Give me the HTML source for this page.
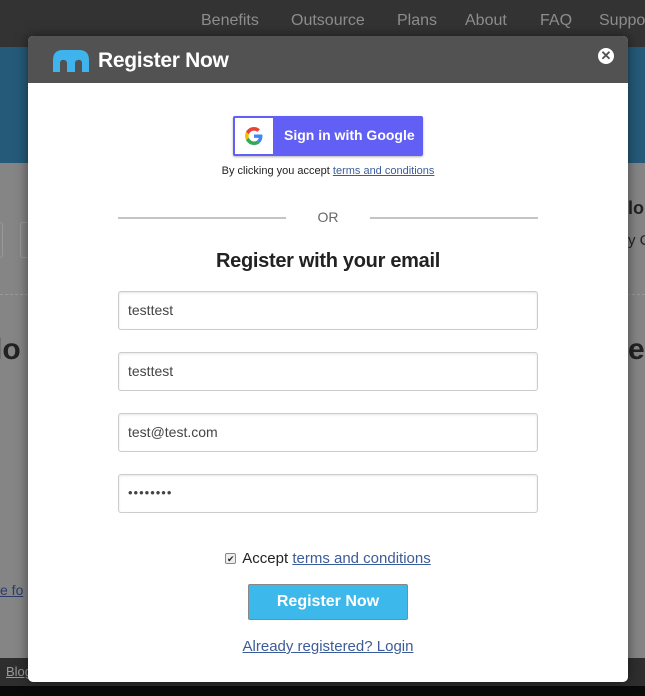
<!DOCTYPE html>
<html><head><style>
*{margin:0;padding:0;box-sizing:border-box}
body{width:645px;height:696px;overflow:hidden;position:relative;background:#858585;font-family:"Liberation Sans",sans-serif}
.nav{position:absolute;left:0;top:0;width:645px;height:47px;background:#333}
.nav span{position:absolute;top:12px;color:#8d8d8d;font-size:16px}
.blue{position:absolute;left:0;top:47px;width:645px;height:116px;background:#255a79}
.bot{position:absolute;left:0;top:658px;width:645px;height:28px;background:#2e2e2e}
.blk{position:absolute;left:0;top:686px;width:645px;height:10px;background:#0a0a0a}
.modal{position:absolute;left:28px;top:36px;width:600px;height:646px;background:#fff;border-radius:5px;overflow:hidden;box-shadow:0 0 12px rgba(0,0,0,.5)}
.hd{height:47px;background:#525252;position:relative}
.hd .t{position:absolute;left:70px;top:13px;color:#fff;font-size:21px;font-weight:bold;letter-spacing:-0.3px}
.close{position:absolute;left:570px;top:12px;width:16px;height:16px;border-radius:50%;background:#fff;color:#525252;font-size:13px;font-weight:bold;line-height:16px;text-align:center}
.c{position:absolute;left:0;width:600px;text-align:center}
.g{position:absolute;left:205px;top:80px;width:190px;height:40px;background:#625ff5;border-radius:2px;box-shadow:0 1px 2px rgba(0,0,0,.3)}
.g .w{position:absolute;left:2px;top:2px;width:38px;height:36px;background:#fff}
.g .l{position:absolute;left:51px;top:11px;color:#fff;font-size:14px;font-weight:bold}
a{color:#3b5c9a;text-decoration:underline}
.line{position:absolute;top:181px;height:2px;background:#c4c4c4}
.in{position:absolute;left:90px;width:420px;height:39px;border:1px solid #ccc;border-radius:3px;box-shadow:inset 0 1px 2px rgba(0,0,0,.1);padding:10px 9px;font-size:14px;color:#444}
.btn{position:absolute;left:220px;top:548px;width:160px;height:36px;background:#3db8ea;border:1px solid #888;border-radius:2px;color:#fff;font-size:16px;font-weight:bold;text-align:center;line-height:34px}
</style></head><body>
<div class="nav"><span style="left:201px">Benefits</span><span style="left:291px">Outsource</span><span style="left:397px">Plans</span><span style="left:465px">About</span><span style="left:540px">FAQ</span><span style="left:599px">Suppo</span></div>
<div class="blue"></div>
<div style="position:absolute;left:-10px;top:222px;width:13px;height:36px;border:1px solid #999;border-radius:3px"></div>
<div style="position:absolute;left:20px;top:222px;width:20px;height:36px;border:1px solid #999;border-radius:3px"></div>
<div style="position:absolute;left:0;top:294px;width:645px;border-top:1px dashed #999"></div>
<div style="position:absolute;left:628px;top:198px;color:#222;font-size:18px;font-weight:bold;white-space:nowrap">lo</div>
<div style="position:absolute;left:628px;top:232px;color:#222;font-size:15px;white-space:nowrap">y C</div>
<div style="position:absolute;top:333px;color:#222;font-size:30px;font-weight:bold;left:-6px">lo</div>
<div style="position:absolute;left:628px;top:333px;color:#222;font-size:30px;font-weight:bold">e</div>
<div style="position:absolute;left:0;top:582px;color:#2b3d6a;font-size:14px;text-decoration:underline">e fo</div>
<div class="bot"><span style="position:absolute;left:6px;top:6px;color:#999;font-size:13px;text-decoration:underline">Blog</span></div>
<div class="blk"></div>
<div class="modal">
 <div class="hd">
  <svg style="position:absolute;left:25px;top:14px" width="36" height="22" viewBox="0 0 36 22"><path d="M0 22V10Q0 0 10 0H26Q36 0 36 10V22H29V13A3 3 0 0 0 25 10A3 3 0 0 0 22 13V22H14V13A3 3 0 0 0 11 10A3 3 0 0 0 7 13V22Z" fill="#3fb3ec"/></svg>
  <div class="t">Register Now</div>
  <div class="close">✕</div>
 </div>
 <div class="g"><div class="w"><svg style="position:absolute;left:10px;top:9px" width="18" height="18" viewBox="0 0 48 48"><path fill="#EA4335" d="M24 9.5c3.5 0 6.6 1.2 9 3.5l6.7-6.7C35.6 2.4 30.2 0 24 0 14.6 0 6.6 5.4 2.7 13.3l7.8 6C12.4 13.700 17.7 9.5 24 9.5z"/><path fill="#4285F4" d="M46.5 24.5c0-1.6-.1-3.1-.4-4.5H24v9h12.7c-.6 3-2.300 5.5-4.8 7.2l7.6 5.9c4.4-4.1 7-10.1 7-17.6z"/><path fill="#FBBC05" d="M10.5 28.7c-.5-1.4-.8-3-.8-4.7s.3-3.3.8-4.7l-7.8-6C1 16.6 0 20.2 0 24s1 7.4 2.7 10.7l7.8-6z"/><path fill="#34A853" d="M24 48c6.5 0 11.9-2.1 15.9-5.8l-7.6-5.9c-2.1 1.4-4.9 2.3-8.3 2.3-6.3 0-11.6-4.2-13.5-9.9l-7.8 6C6.6 42.600 14.6 48 24 48z"/></svg></div><div class="l">Sign in with Google</div></div>
 <div class="c" style="top:129px;font-size:11px;color:#222">By clicking you accept <a>terms and conditions</a></div>
 <div class="line" style="left:90px;width:168px"></div>
 <div class="line" style="left:342px;width:168px"></div>
 <div class="c" style="top:173px;font-size:14px;color:#666">OR</div>
 <div class="c" style="top:214px;font-size:20px;font-weight:bold;color:#222;letter-spacing:-0.3px">Register with your email</div>
 <div class="in" style="top:255px">testtest</div>
 <div class="in" style="top:316px">testtest</div>
 <div class="in" style="top:377px">test@test.com</div>
 <div class="in" style="top:438px;font-size:13px;letter-spacing:1px">••••••••</div>
 <div class="c" style="top:514px;font-size:15px;color:#222"><span style="display:inline-block;width:11px;height:11px;border:1px solid #888;border-radius:2px;background:#eee;font-size:9px;line-height:10px;vertical-align:1px;margin-right:6px">✔</span>Accept <a>terms and conditions</a></div>
 <div class="btn">Register Now</div>
 <div class="c" style="top:602px;font-size:15px"><a>Already registered? Login</a></div>
</div>
</body></html>
